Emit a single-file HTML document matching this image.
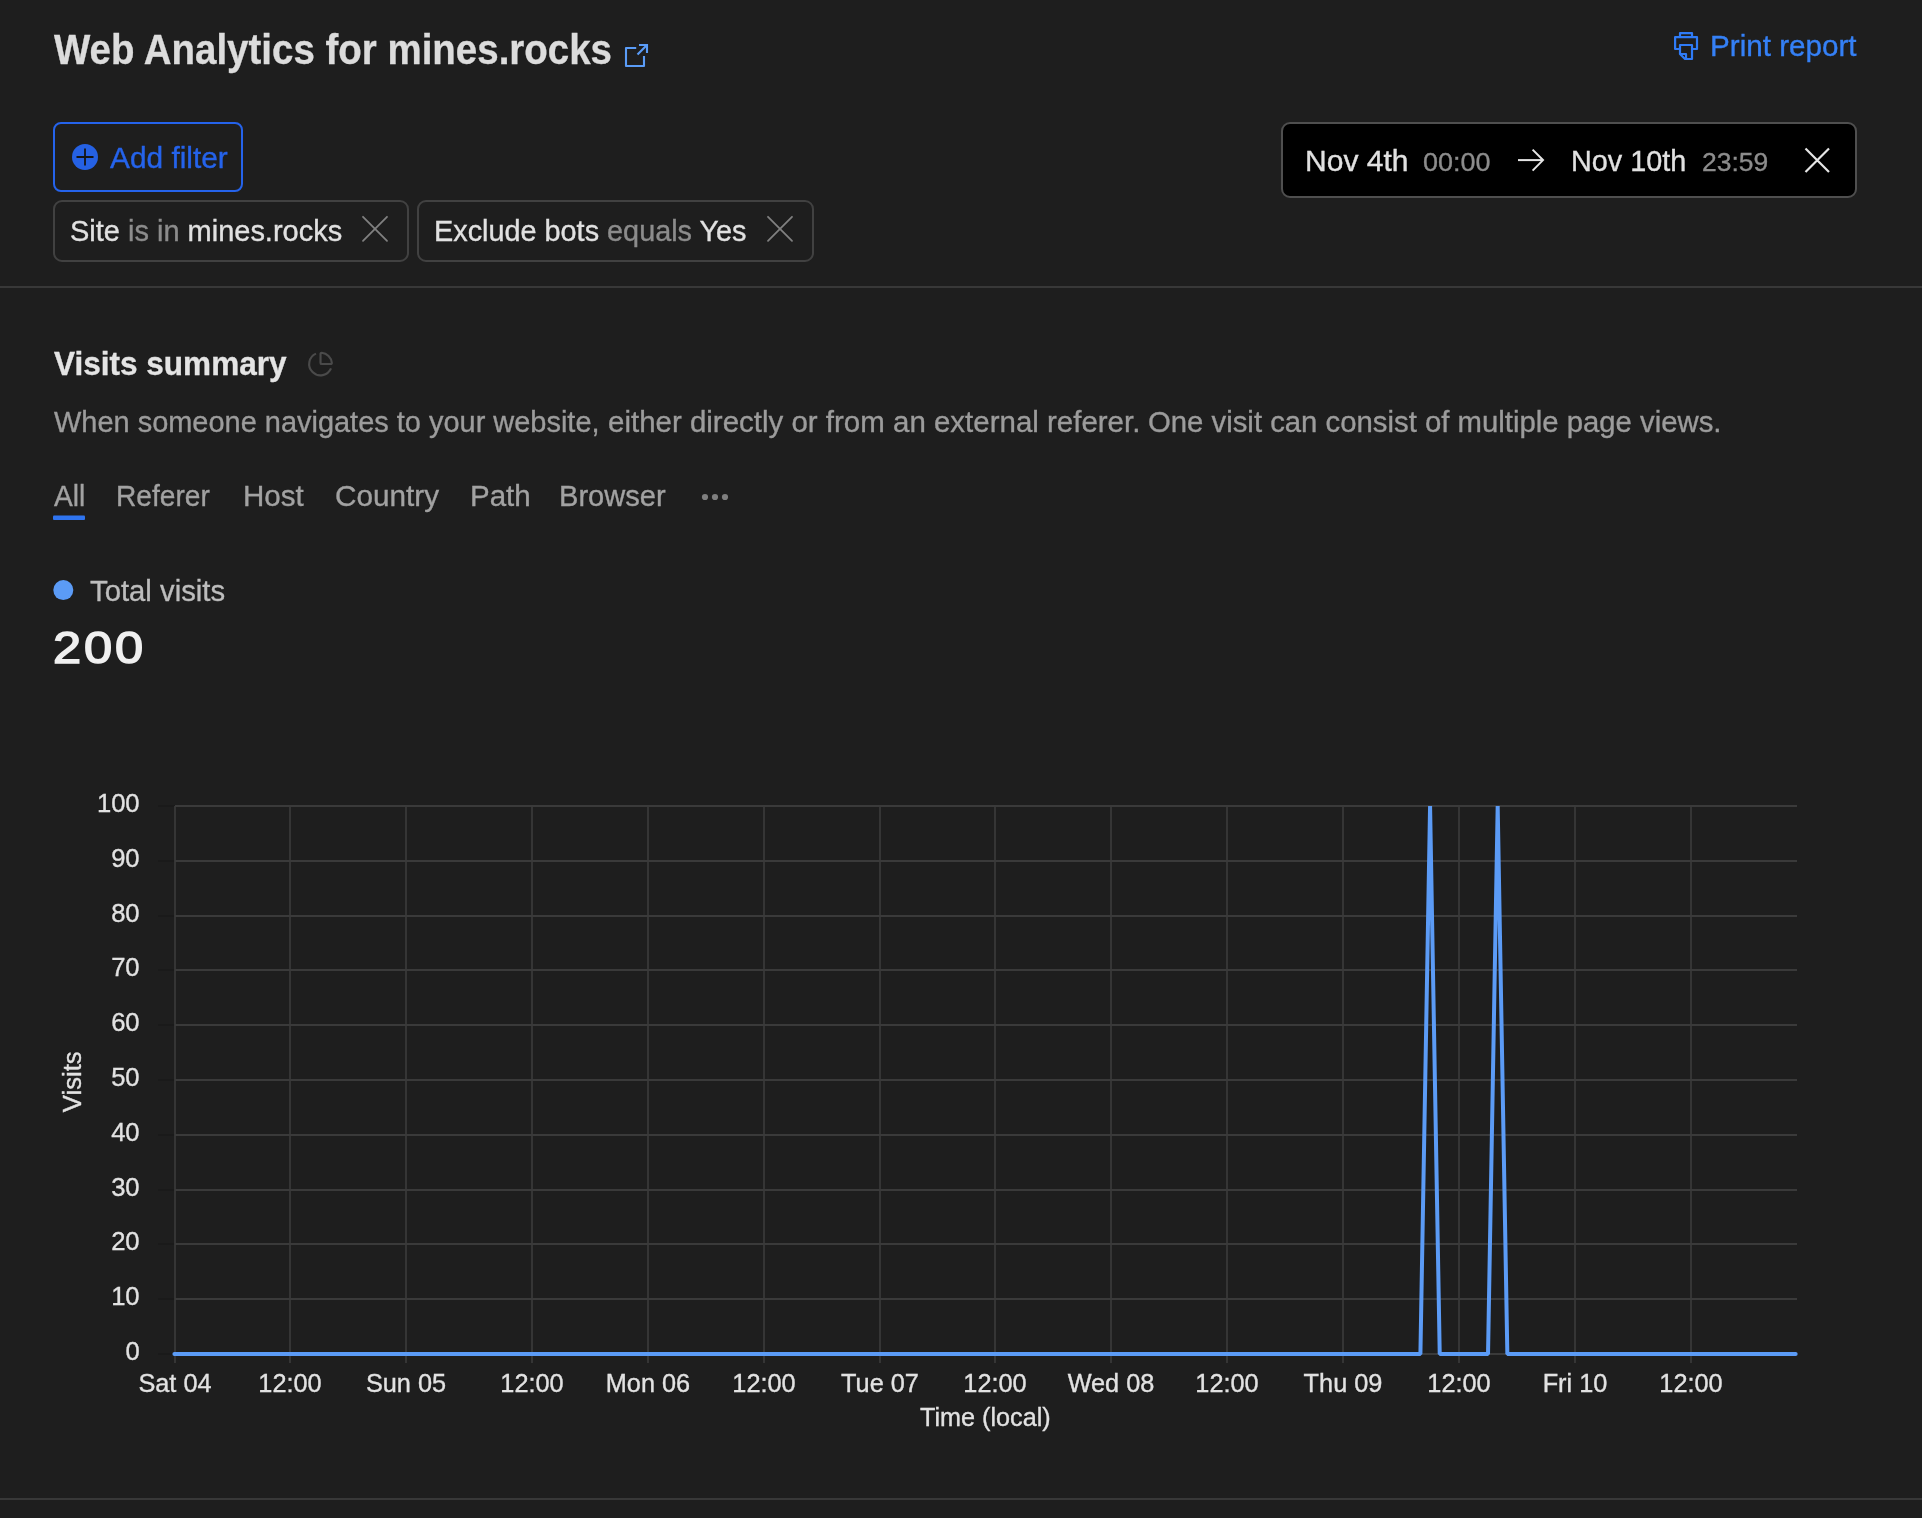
<!DOCTYPE html>
<html><head><meta charset="utf-8"><style>
html,body{margin:0;padding:0;background:#1e1e1e;width:1922px;height:1518px;overflow:hidden;font-family:"Liberation Sans", sans-serif;}
body{position:relative}
#wrap div{-webkit-text-stroke:0.35px currentColor}
#wrap #t_200{-webkit-text-stroke:1.5px currentColor;font-weight:400 !important;letter-spacing:2.5px}
#wrap{position:absolute;left:0;top:0;width:1922px;height:1518px;will-change:transform}
</style></head><body><div id="wrap">
<div style="position:absolute;left:53px;top:122px;width:190px;height:70px;box-sizing:border-box;border:2px solid #2563eb;border-radius:8px"></div><div style="position:absolute;left:53px;top:200px;width:356px;height:62px;box-sizing:border-box;border:2px solid #414141;border-radius:9px"></div><div style="position:absolute;left:417px;top:200px;width:397px;height:62px;box-sizing:border-box;border:2px solid #414141;border-radius:9px"></div><div style="position:absolute;left:1281px;top:122px;width:576px;height:76px;box-sizing:border-box;border:2px solid #4f4f4f;border-radius:9px;background:#000"></div>
<svg width="1922" height="1518" style="position:absolute;left:0;top:0"><rect x="0" y="286" width="1922" height="2" fill="#383838"/><rect x="0" y="1498" width="1922" height="2" fill="#383838"/><line x1="158" y1="806" x2="175.0" y2="806" stroke="#1a1a1a" stroke-width="2"/><line x1="158" y1="861" x2="175.0" y2="861" stroke="#1a1a1a" stroke-width="2"/><line x1="158" y1="916" x2="175.0" y2="916" stroke="#1a1a1a" stroke-width="2"/><line x1="158" y1="970" x2="175.0" y2="970" stroke="#1a1a1a" stroke-width="2"/><line x1="158" y1="1025" x2="175.0" y2="1025" stroke="#1a1a1a" stroke-width="2"/><line x1="158" y1="1080" x2="175.0" y2="1080" stroke="#1a1a1a" stroke-width="2"/><line x1="158" y1="1135" x2="175.0" y2="1135" stroke="#1a1a1a" stroke-width="2"/><line x1="158" y1="1190" x2="175.0" y2="1190" stroke="#1a1a1a" stroke-width="2"/><line x1="158" y1="1244" x2="175.0" y2="1244" stroke="#1a1a1a" stroke-width="2"/><line x1="158" y1="1299" x2="175.0" y2="1299" stroke="#1a1a1a" stroke-width="2"/><line x1="158" y1="1354" x2="175.0" y2="1354" stroke="#1a1a1a" stroke-width="2"/><line x1="175" y1="806" x2="175" y2="1363" stroke="#353535" stroke-width="2"/><line x1="290" y1="806" x2="290" y2="1363" stroke="#353535" stroke-width="2"/><line x1="406" y1="806" x2="406" y2="1363" stroke="#353535" stroke-width="2"/><line x1="532" y1="806" x2="532" y2="1363" stroke="#353535" stroke-width="2"/><line x1="648" y1="806" x2="648" y2="1363" stroke="#353535" stroke-width="2"/><line x1="764" y1="806" x2="764" y2="1363" stroke="#353535" stroke-width="2"/><line x1="880" y1="806" x2="880" y2="1363" stroke="#353535" stroke-width="2"/><line x1="995" y1="806" x2="995" y2="1363" stroke="#353535" stroke-width="2"/><line x1="1111" y1="806" x2="1111" y2="1363" stroke="#353535" stroke-width="2"/><line x1="1227" y1="806" x2="1227" y2="1363" stroke="#353535" stroke-width="2"/><line x1="1343" y1="806" x2="1343" y2="1363" stroke="#353535" stroke-width="2"/><line x1="1459" y1="806" x2="1459" y2="1363" stroke="#353535" stroke-width="2"/><line x1="1575" y1="806" x2="1575" y2="1363" stroke="#353535" stroke-width="2"/><line x1="1691" y1="806" x2="1691" y2="1363" stroke="#353535" stroke-width="2"/><line x1="175.0" y1="806" x2="1797.0" y2="806" stroke="#3a3a3a" stroke-width="2"/><line x1="175.0" y1="861" x2="1797.0" y2="861" stroke="#3a3a3a" stroke-width="2"/><line x1="175.0" y1="916" x2="1797.0" y2="916" stroke="#3a3a3a" stroke-width="2"/><line x1="175.0" y1="970" x2="1797.0" y2="970" stroke="#3a3a3a" stroke-width="2"/><line x1="175.0" y1="1025" x2="1797.0" y2="1025" stroke="#3a3a3a" stroke-width="2"/><line x1="175.0" y1="1080" x2="1797.0" y2="1080" stroke="#3a3a3a" stroke-width="2"/><line x1="175.0" y1="1135" x2="1797.0" y2="1135" stroke="#3a3a3a" stroke-width="2"/><line x1="175.0" y1="1190" x2="1797.0" y2="1190" stroke="#3a3a3a" stroke-width="2"/><line x1="175.0" y1="1244" x2="1797.0" y2="1244" stroke="#3a3a3a" stroke-width="2"/><line x1="175.0" y1="1299" x2="1797.0" y2="1299" stroke="#3a3a3a" stroke-width="2"/><line x1="175.0" y1="1354" x2="1797.0" y2="1354" stroke="#3a3a3a" stroke-width="2"/><clipPath id="cp"><rect x="150" y="806" width="1700" height="600"/></clipPath><path d="M174.40,1354.00 L1420.41,1354.00 L1430.07,806.00 L1439.73,1354.00 L1488.02,1354.00 L1497.68,806.00 L1507.34,1354.00 L1795.66,1354.00" fill="none" stroke="#5b9bf6" stroke-width="4" stroke-linecap="round" stroke-linejoin="bevel" clip-path="url(#cp)"/><g fill="none" stroke="#5a9cf7" stroke-width="2.1" stroke-linecap="butt" stroke-linejoin="miter"><path d="M636.2,48 H626 V66 H644 V56" stroke-linejoin="round"/><path d="M639,45 H647 V53"/><path d="M647,45 L637.5,54.5"/></g><g fill="none" stroke="#2f7bf6" stroke-width="2.2" stroke-linejoin="round"><path d="M1680,37 V33.1 H1692 V37"/><path d="M1680,49 H1675.1 V37.2 H1697 V49 H1692"/><path d="M1680,54 V45 H1692 V59 H1685 Z"/><path d="M1680,54 H1686 V59"/></g><g transform="translate(306.9,350.4) scale(1.136)" fill="none" stroke="#4a4a4a" stroke-width="1.9" stroke-linecap="butt" stroke-linejoin="round"><path d="M21 12c.552 0 1.005-.449.95-.998a10 10 0 0 0-8.953-8.951c-.55-.055-.998.398-.998.95v8a1 1 0 0 0 1 1z"/><path d="M21.21 15.89A10 10 0 1 1 8 2.83"/></g><circle cx="85" cy="157" r="13" fill="#2561e4"/><path d="M76.5,157 H93.5 M85,148.5 V165.5" stroke="#151515" stroke-width="1.8"/><path d="M363,216.8 L387,240.8 M387,216.8 L363,240.8" stroke="#808080" stroke-width="1.8" stroke-linecap="round"/><path d="M768,216.8 L792,240.8 M792,216.8 L768,240.8" stroke="#808080" stroke-width="1.8" stroke-linecap="round"/><path d="M1805.5,148.5 L1829,172 M1829,148.5 L1805.5,172" stroke="#e6e6e6" stroke-width="2.2"/><g fill="none" stroke="#e6e6e6" stroke-width="2" stroke-linecap="butt"><path d="M1518,160.1 H1543"/><path d="M1532.6,149.6 L1543,160.1 L1532.6,170.6"/></g><circle cx="705" cy="497" r="3.1" fill="#7f7f7f"/><circle cx="715" cy="497" r="3.1" fill="#7f7f7f"/><circle cx="725" cy="497" r="3.1" fill="#7f7f7f"/><circle cx="63.3" cy="590.1" r="10" fill="#5b9bf6"/><rect x="53" y="515.6" width="32" height="4.3" rx="1" fill="#2f74ef"/></svg>
<div id="t_title" style="position:absolute;left:54.00px;top:28.65px;font-size:42px;line-height:42px;color:#dcdcdc;font-weight:700;white-space:nowrap;transform:scaleX(0.9159);transform-origin:0 0;">Web Analytics for mines.rocks</div>
<div id="t_print" style="position:absolute;left:1710.18px;top:30.64px;font-size:29.6px;line-height:29.6px;color:#3580f6;font-weight:400;white-space:nowrap;transform:scaleX(1.0013);transform-origin:0 0;">Print report</div>
<div id="t_addf" style="position:absolute;left:109.80px;top:142.86px;font-size:29.7px;line-height:29.7px;color:#2563eb;font-weight:400;white-space:nowrap;transform:scaleX(1.0054);transform-origin:0 0;">Add filter</div>
<div id="t_chip1" style="position:absolute;left:70.40px;top:217.25px;font-size:29px;line-height:29px;color:#e1e1e1;font-weight:400;white-space:nowrap;transform:scaleX(0.9992);transform-origin:0 0;">Site <span style="color:#8c8c8c">is in</span> mines.rocks</div>
<div id="t_chip2" style="position:absolute;left:433.82px;top:217.25px;font-size:29px;line-height:29px;color:#e1e1e1;font-weight:400;white-space:nowrap;transform:scaleX(0.9940);transform-origin:0 0;">Exclude bots <span style="color:#8c8c8c">equals</span> Yes</div>
<div id="t_nov4" style="position:absolute;left:1304.66px;top:145.94px;font-size:29.6px;line-height:29.6px;color:#e1e1e1;font-weight:400;white-space:nowrap;transform:scaleX(1.0145);transform-origin:0 0;">Nov 4th</div>
<div id="t_t00" style="position:absolute;left:1423.48px;top:148.90px;font-size:26.7px;line-height:26.7px;color:#8c8c8c;font-weight:400;white-space:nowrap;transform:scaleX(1.0094);transform-origin:0 0;">00:00</div>
<div id="t_nov10" style="position:absolute;left:1570.96px;top:145.94px;font-size:29.6px;line-height:29.6px;color:#e1e1e1;font-weight:400;white-space:nowrap;transform:scaleX(0.9722);transform-origin:0 0;">Nov 10th</div>
<div id="t_t2359" style="position:absolute;left:1702.20px;top:148.90px;font-size:26.7px;line-height:26.7px;color:#8c8c8c;font-weight:400;white-space:nowrap;transform:scaleX(0.9911);transform-origin:0 0;">23:59</div>
<div id="t_vs" style="position:absolute;left:54.40px;top:348.19px;font-size:32.5px;line-height:32.5px;color:#e4e4e4;font-weight:700;white-space:nowrap;transform:scaleX(0.9701);transform-origin:0 0;">Visits summary</div>
<div id="t_desc1" style="position:absolute;left:54.00px;top:407.85px;font-size:29.24px;line-height:29.24px;color:#9c9c9c;font-weight:400;white-space:nowrap;transform:scaleX(0.9903);transform-origin:0 0;">When someone navigates to your website,</div>
<div id="t_desc2" style="position:absolute;left:607.89px;top:407.85px;font-size:29.24px;line-height:29.24px;color:#9c9c9c;font-weight:400;white-space:nowrap;transform:scaleX(1.0082);transform-origin:0 0;">either directly or from an external referer.</div>
<div id="t_desc3" style="position:absolute;left:1147.90px;top:407.85px;font-size:29.24px;line-height:29.24px;color:#9c9c9c;font-weight:400;white-space:nowrap;transform:scaleX(1.0026);transform-origin:0 0;">One visit can consist of multiple page views.</div>
<div id="t_all" style="position:absolute;left:53.59px;top:481.03px;font-size:29.5px;line-height:29.5px;color:#a2a2a2;font-weight:400;white-space:nowrap;transform:scaleX(0.9554);transform-origin:0 0;">All</div>
<div id="t_ref" style="position:absolute;left:116.30px;top:481.03px;font-size:29.5px;line-height:29.5px;color:#a2a2a2;font-weight:400;white-space:nowrap;transform:scaleX(0.9541);transform-origin:0 0;">Referer</div>
<div id="t_host" style="position:absolute;left:242.80px;top:481.03px;font-size:29.5px;line-height:29.5px;color:#a2a2a2;font-weight:400;white-space:nowrap;transform:scaleX(1.0002);transform-origin:0 0;">Host</div>
<div id="t_country" style="position:absolute;left:334.78px;top:481.03px;font-size:29.5px;line-height:29.5px;color:#a2a2a2;font-weight:400;white-space:nowrap;transform:scaleX(1.0078);transform-origin:0 0;">Country</div>
<div id="t_path" style="position:absolute;left:469.59px;top:481.03px;font-size:29.5px;line-height:29.5px;color:#a2a2a2;font-weight:400;white-space:nowrap;transform:scaleX(1.0004);transform-origin:0 0;">Path</div>
<div id="t_browser" style="position:absolute;left:559.42px;top:481.03px;font-size:29.5px;line-height:29.5px;color:#a2a2a2;font-weight:400;white-space:nowrap;transform:scaleX(0.9851);transform-origin:0 0;">Browser</div>
<div id="t_tv" style="position:absolute;left:90.20px;top:576.43px;font-size:29.5px;line-height:29.5px;color:#bdbdbd;font-weight:400;white-space:nowrap;transform:scaleX(0.9926);transform-origin:0 0;">Total visits</div>
<div id="t_200" style="position:absolute;left:52.90px;top:625.95px;font-size:44px;line-height:44px;color:#f0f0f0;font-weight:700;white-space:nowrap;transform:scaleX(1.1494);transform-origin:0 0;">200</div>
<div id="t_time" style="position:absolute;left:919.60px;top:1404.50px;font-size:25.4px;line-height:25.4px;color:#e2e2e2;font-weight:400;white-space:nowrap;transform:scaleX(0.9925);transform-origin:0 0;">Time (local)</div>

<div style="position:absolute;right:1782.4px;top:790.83px;font-size:25.6px;line-height:25.6px;color:#e2e2e2;white-space:nowrap">100</div>
<div style="position:absolute;right:1782.4px;top:845.83px;font-size:25.6px;line-height:25.6px;color:#e2e2e2;white-space:nowrap">90</div>
<div style="position:absolute;right:1782.4px;top:900.83px;font-size:25.6px;line-height:25.6px;color:#e2e2e2;white-space:nowrap">80</div>
<div style="position:absolute;right:1782.4px;top:954.83px;font-size:25.6px;line-height:25.6px;color:#e2e2e2;white-space:nowrap">70</div>
<div style="position:absolute;right:1782.4px;top:1009.83px;font-size:25.6px;line-height:25.6px;color:#e2e2e2;white-space:nowrap">60</div>
<div style="position:absolute;right:1782.4px;top:1064.83px;font-size:25.6px;line-height:25.6px;color:#e2e2e2;white-space:nowrap">50</div>
<div style="position:absolute;right:1782.4px;top:1119.83px;font-size:25.6px;line-height:25.6px;color:#e2e2e2;white-space:nowrap">40</div>
<div style="position:absolute;right:1782.4px;top:1174.83px;font-size:25.6px;line-height:25.6px;color:#e2e2e2;white-space:nowrap">30</div>
<div style="position:absolute;right:1782.4px;top:1228.83px;font-size:25.6px;line-height:25.6px;color:#e2e2e2;white-space:nowrap">20</div>
<div style="position:absolute;right:1782.4px;top:1283.83px;font-size:25.6px;line-height:25.6px;color:#e2e2e2;white-space:nowrap">10</div>
<div style="position:absolute;right:1782.4px;top:1338.83px;font-size:25.6px;line-height:25.6px;color:#e2e2e2;white-space:nowrap">0</div>
<div style="position:absolute;left:25.00px;width:300px;text-align:center;top:1371.18px;font-size:25.3px;line-height:25.3px;color:#e2e2e2;white-space:nowrap">Sat 04</div>
<div style="position:absolute;left:140.00px;width:300px;text-align:center;top:1371.18px;font-size:25.3px;line-height:25.3px;color:#e2e2e2;white-space:nowrap">12:00</div>
<div style="position:absolute;left:256.00px;width:300px;text-align:center;top:1371.18px;font-size:25.3px;line-height:25.3px;color:#e2e2e2;white-space:nowrap">Sun 05</div>
<div style="position:absolute;left:382.00px;width:300px;text-align:center;top:1371.18px;font-size:25.3px;line-height:25.3px;color:#e2e2e2;white-space:nowrap">12:00</div>
<div style="position:absolute;left:498.00px;width:300px;text-align:center;top:1371.18px;font-size:25.3px;line-height:25.3px;color:#e2e2e2;white-space:nowrap">Mon 06</div>
<div style="position:absolute;left:614.00px;width:300px;text-align:center;top:1371.18px;font-size:25.3px;line-height:25.3px;color:#e2e2e2;white-space:nowrap">12:00</div>
<div style="position:absolute;left:730.00px;width:300px;text-align:center;top:1371.18px;font-size:25.3px;line-height:25.3px;color:#e2e2e2;white-space:nowrap">Tue 07</div>
<div style="position:absolute;left:845.00px;width:300px;text-align:center;top:1371.18px;font-size:25.3px;line-height:25.3px;color:#e2e2e2;white-space:nowrap">12:00</div>
<div style="position:absolute;left:961.00px;width:300px;text-align:center;top:1371.18px;font-size:25.3px;line-height:25.3px;color:#e2e2e2;white-space:nowrap">Wed 08</div>
<div style="position:absolute;left:1077.00px;width:300px;text-align:center;top:1371.18px;font-size:25.3px;line-height:25.3px;color:#e2e2e2;white-space:nowrap">12:00</div>
<div style="position:absolute;left:1193.00px;width:300px;text-align:center;top:1371.18px;font-size:25.3px;line-height:25.3px;color:#e2e2e2;white-space:nowrap">Thu 09</div>
<div style="position:absolute;left:1309.00px;width:300px;text-align:center;top:1371.18px;font-size:25.3px;line-height:25.3px;color:#e2e2e2;white-space:nowrap">12:00</div>
<div style="position:absolute;left:1425.00px;width:300px;text-align:center;top:1371.18px;font-size:25.3px;line-height:25.3px;color:#e2e2e2;white-space:nowrap">Fri 10</div>
<div style="position:absolute;left:1541.00px;width:300px;text-align:center;top:1371.18px;font-size:25.3px;line-height:25.3px;color:#e2e2e2;white-space:nowrap">12:00</div>
<div style="position:absolute;left:-76.8px;top:1068.6000000000001px;width:300px;height:25.6px;text-align:center;font-size:25.6px;line-height:25.6px;color:#e2e2e2;transform:rotate(-90deg);white-space:nowrap">Visits</div>

</div></body></html>
